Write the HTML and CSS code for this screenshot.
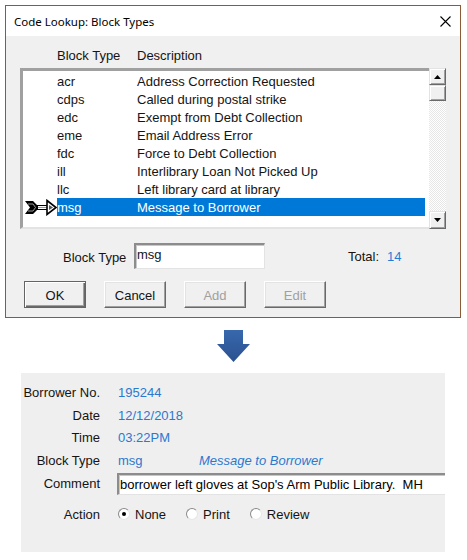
FILE: index.html
```html
<!DOCTYPE html>
<html>
<head>
<meta charset="utf-8">
<title>Code Lookup</title>
<link rel="stylesheet" href="styles.css">
</head>
<body>
<div class="dialog">
  <div class="titlebar">
    <span class="title">Code Lookup: Block Types</span>
    <svg class="close" width="11" height="11" viewBox="0 0 11 11"><path d="M0.5 0.5 L10.5 10.5 M10.5 0.5 L0.5 10.5" stroke="#000" stroke-width="1.1" fill="none"/></svg>
  </div>
  <div class="dlg-body">
    <div class="col-head"><span class="c-code">Block Type</span><span class="c-desc">Description</span></div>
    <div class="listbox">
      <div class="list-area">
        <div class="row"><span class="ptr"></span><span class="sel-area"><span class="c-code">acr</span><span class="c-desc">Address Correction Requested</span></span></div>
        <div class="row"><span class="ptr"></span><span class="sel-area"><span class="c-code">cdps</span><span class="c-desc">Called during postal strike</span></span></div>
        <div class="row"><span class="ptr"></span><span class="sel-area"><span class="c-code">edc</span><span class="c-desc">Exempt from Debt Collection</span></span></div>
        <div class="row"><span class="ptr"></span><span class="sel-area"><span class="c-code">eme</span><span class="c-desc">Email Address Error</span></span></div>
        <div class="row"><span class="ptr"></span><span class="sel-area"><span class="c-code">fdc</span><span class="c-desc">Force to Debt Collection</span></span></div>
        <div class="row"><span class="ptr"></span><span class="sel-area"><span class="c-code">ill</span><span class="c-desc">Interlibrary Loan Not Picked Up</span></span></div>
        <div class="row"><span class="ptr"></span><span class="sel-area"><span class="c-code">llc</span><span class="c-desc">Left library card at library</span></span></div>
        <div class="row"><span class="ptr"><svg width="32" height="17" viewBox="0 0 32 17">
          <polygon points="0,2 8,2 13,7 13,10 8,15 0,15 5,8.5" fill="#000"/>
          <path d="M3 5 L8 5 L10.5 8.5 L8 12 L3 12" stroke="#9a9a9a" stroke-width="1" fill="none"/>
          <rect x="12.5" y="6.5" width="11" height="4" fill="#fff" stroke="#000" stroke-width="1"/>
          <line x1="13" y1="8.5" x2="23" y2="8.5" stroke="#9a9a9a" stroke-width="1"/>
          <polygon points="22,1.5 31,8.5 22,15.5" fill="#fff" stroke="#000" stroke-width="1.6" stroke-linejoin="miter"/>
          <polygon points="24,6 28,8.5 24,11" fill="#555"/>
        </svg></span><span class="sel-area selected"><span class="c-code">msg</span><span class="c-desc">Message to Borrower</span></span></div>
      </div>
      <div class="vscroll">
        <div class="sbtn"><svg width="7" height="4" viewBox="0 0 7 4"><polygon points="3.5,0 7,4 0,4" fill="#000"/></svg></div>
        <div class="thumb"></div>
        <div class="track"></div>
        <div class="sbtn down"><svg width="7" height="4" viewBox="0 0 7 4"><polygon points="0,0 7,0 3.5,4" fill="#000"/></svg></div>
      </div>
    </div>
    <div class="entry-row">
      <span class="entry-label">Block Type</span>
      <span class="textbox">msg</span>
      <span class="total-label">Total:</span>
      <span class="total-value">14</span>
    </div>
    <div class="buttons">
      <span class="btn default">OK</span>
      <span class="btn">Cancel</span>
      <span class="btn disabled">Add</span>
      <span class="btn disabled">Edit</span>
    </div>
  </div>
</div>

<div class="arrow-wrap">
  <svg width="33" height="32" viewBox="0 0 33 32">
    <defs>
      <linearGradient id="ag" x1="0" y1="0" x2="0" y2="1">
        <stop offset="0" stop-color="#3868ad"/>
        <stop offset="1" stop-color="#2a5190"/>
      </linearGradient>
    </defs>
    <polygon points="7,0 26,0 26,14 33,14 16.5,32 0,14 7,14" fill="url(#ag)"/>
  </svg>
</div>

<div class="panel">
  <div class="form">
    <span class="lbl">Borrower No.</span><span class="val">195244</span>
    <span class="lbl">Date</span><span class="val">12/12/2018</span>
    <span class="lbl">Time</span><span class="val">03:22PM</span>
    <span class="lbl">Block Type</span><span class="val"><span class="bt-code">msg</span><span class="bt-desc">Message to Borrower</span></span>
    <span class="lbl">Comment</span><span class="val comment-cell"><span class="comment">borrower left gloves at Sop's Arm Public Library.  MH</span></span>
    <span class="lbl">Action</span>
    <span class="val radios">
      <span class="radio"><span class="circle checked"></span>None</span>
      <span class="radio"><span class="circle"></span>Print</span>
      <span class="radio"><span class="circle"></span>Review</span>
    </span>
  </div>
</div>
</body>
</html>
```

FILE: styles.css
```css
* { box-sizing: border-box; }

body {
  margin: 0;
  background: #fff;
  font-family: "Liberation Sans", Arial, sans-serif;
  font-size: 13px;
  color: #141414;
}

.dialog {
  margin: 5px 0 0 5px;
  width: 456px;
  border: 1px solid #8a5b36;
}

.titlebar {
  height: 30px;
  background: #fff;
  display: flex;
  align-items: center;
  justify-content: space-between;
  padding: 0 9px 0 8px;
}

.title {
  font-family: "Noto Sans", "Liberation Sans", sans-serif;
  font-size: 11.5px;
  color: #000;
}

.close { display: block; margin-top: 1px; }

.dlg-body {
  background: #f0f0f0;
  padding: 11px 0 9px 0;
}

.col-head {
  display: flex;
  height: 18px;
  line-height: 18px;
  padding-left: 51px;
}

.c-code { width: 80px; flex: none; }
.c-desc { flex: 1; white-space: nowrap; }

.listbox {
  margin: 3px 0 0 14px;
  width: 426px;
  height: 161px;
  display: flex;
}

.list-area {
  width: 409px;
  height: 161px;
  background: #fff;
  border-top: 3px solid #a0a0a0;
  border-left: 3px solid #a0a0a0;
  border-bottom: 2px solid #e3e3e3;
  padding: 1px 4px 0 0;
}

.row {
  display: flex;
  height: 18px;
  line-height: 19px;
}

.ptr {
  width: 34px;
  flex: none;
  display: flex;
  align-items: center;
  padding-left: 2px;
}

.ptr svg { display: block; }

.sel-area {
  flex: 1;
  display: flex;
}

.sel-area.selected {
  background: #0078d7;
  color: #fff;
}

.vscroll {
  width: 17px;
  height: 161px;
  display: flex;
  flex-direction: column;
}

.sbtn, .thumb {
  background: #f0f0f0;
  border: 1px solid;
  border-color: #e3e3e3 #696969 #696969 #e3e3e3;
  box-shadow: inset 1px 1px 0 #fff, inset -1px -1px 0 #a0a0a0;
}

.sbtn {
  height: 17px;
  display: flex;
  align-items: center;
  justify-content: center;
}

.sbtn.down { height: 18px; }

.thumb { height: 16px; }

.track {
  flex: 1;
  background: repeating-conic-gradient(#ffffff 0 25%, #e6e6e6 0 50%) 0 0 / 2px 2px;
}

.entry-row {
  margin-top: 14px;
  height: 26px;
  display: flex;
  align-items: center;
  padding-left: 57px;
}

.entry-label { width: 71px; padding-top: 2px; }

.textbox {
  width: 131px;
  height: 26px;
  background: #fff;
  border-style: solid;
  border-width: 2px 1px 1px 2px;
  border-color: #8c8c8c #e3e3e3 #e3e3e3 #8c8c8c;
  box-shadow: inset 1px 1px 0 #c8c8c8;
  padding: 2px 0 0 1px;
  line-height: 16px;
}

.total-label { margin-left: 83px; width: 39px; }

.total-value { color: #1f7fd6; }

.buttons {
  margin-top: 12px;
  display: flex;
  gap: 18px;
  padding-left: 18px;
}

.btn {
  width: 62px;
  height: 27px;
  display: flex;
  align-items: center;
  justify-content: center;
  background: #f0f0f0;
  border: 1px solid;
  border-color: #fff #696969 #696969 #fff;
  box-shadow: inset -1px -1px 0 #a0a0a0, inset 1px 1px 0 #e3e3e3;
  padding-top: 1px;
}

.btn.default {
  border-color: #646464;
  box-shadow: inset 1px 1px 0 #fff, inset -1px -1px 0 #696969, inset -2px -2px 0 #a0a0a0;
}

.btn.disabled { color: #a0a0a0; }

.arrow-wrap {
  padding: 12px 0 11px 0;
  display: flex;
  justify-content: center;
}

.arrow-wrap svg { display: block; }

.panel {
  margin-left: 21px;
  width: 424px;
  height: 179px;
  background: #efefef;
  overflow: hidden;
  padding-top: 8px;
}

.form {
  display: grid;
  grid-template-columns: 79px 1fr;
  grid-template-rows: 23px 22px 23px 23px 23px 38px;
  column-gap: 17px;
  align-items: center;
}

.lbl {
  text-align: right;
  white-space: nowrap;
}

.val {
  color: #2a79d0;
  padding-left: 1px;
  white-space: nowrap;
  display: flex;
}

.bt-code { width: 81px; }

.bt-desc { font-style: italic; }

.comment-cell {
  align-self: end;
  padding-left: 0;
}

.comment {
  display: block;
  width: 340px;
  height: 22px;
  background: #fff;
  color: #000;
  border-style: solid;
  border-width: 2px 1px 1px 2px;
  border-color: #8c8c8c #e3e3e3 #e3e3e3 #8c8c8c;
  box-shadow: inset 1px 1px 0 #c8c8c8;
  padding: 2px 0 0 1px;
  line-height: 16px;
  white-space: pre;
}

.radios {
  color: #141414;
  align-items: center;
  gap: 20px;
}

.radio {
  display: flex;
  align-items: center;
  gap: 5px;
}

.circle {
  width: 12px;
  height: 12px;
  border-radius: 50%;
  background: #fff;
  border: 1px solid;
  border-color: #8a8a8a #e6e6e6 #e6e6e6 #8a8a8a;
  display: flex;
  align-items: center;
  justify-content: center;
}

.circle.checked::after {
  content: "";
  width: 4px;
  height: 4px;
  border-radius: 50%;
  background: #000;
}
```
